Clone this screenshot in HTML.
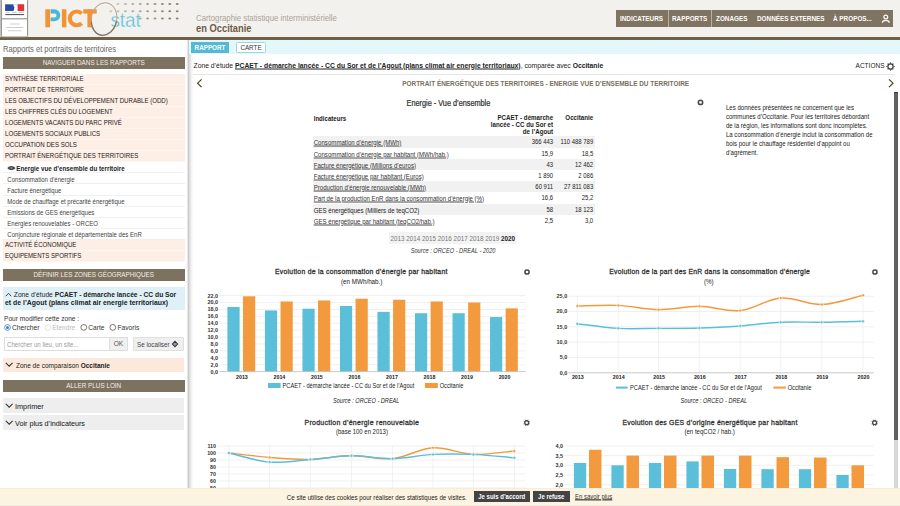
<!DOCTYPE html>
<html><head><meta charset="utf-8">
<style>
*{box-sizing:border-box;margin:0;padding:0}
html,body{width:900px;height:506px;overflow:hidden;background:#fff;font-family:"Liberation Sans",sans-serif;color:#222}
.a{position:absolute;white-space:nowrap}
.t{display:inline-block;transform:scaleY(1.17);transform-origin:0 50%;text-decoration:inherit;text-decoration-thickness:inherit;text-underline-offset:inherit;text-decoration-color:inherit;white-space:nowrap}
#hdr{position:absolute;left:0;top:0;width:900px;height:37px;background:#f3f1ed}
#hdrb{position:absolute;left:0;top:37.2px;width:900px;height:2.6px;background:#6f6049}
#menu{position:absolute;left:616px;top:10px;width:277px;height:17px;background:#7f7362}
#menu span{position:absolute;white-space:nowrap;top:0;height:17px;line-height:17px;color:#fff;font-weight:bold;font-size:6.36px}
.bar{position:absolute;left:2.5px;width:182.5px;height:11.7px;background:#7d7160;color:#f4efe6;font-size:6.34px;line-height:11.7px;text-align:center}
.it{position:absolute;left:2.5px;width:182.5px;height:11.05px;background:#fdeee6;font-size:6.1px;line-height:9.6px;padding-left:2.5px;color:#222;border-bottom:0.8px solid #fdf6f2}
.sub{position:absolute;left:2.5px;width:182.5px;height:11.05px;background:#fff;font-size:6.05px;line-height:10.6px;padding-top:1.5px;padding-left:4.8px;color:#444;border-bottom:0.8px solid #f0f0f0}
</style></head><body>
<div id="hdr"></div><div id="hdrb"></div>
<!-- marianne logo -->
<svg class="a" style="left:0;top:0" width="30" height="38">
<rect x="0" y="0" width="1.2" height="37.2" fill="#c9c6c0"/>
<rect x="1.4" y="-1" width="26.2" height="38" rx="1.5" fill="#fff" stroke="#8c8c8c" stroke-width="1"/>
<rect x="5.1" y="4.3" width="19" height="6.7" fill="#2a4c9c"/>
<path d="M12.6 4.3 C14.4 5.4 13.3 6.7 14.5 7.5 C13.9 8.5 14.4 9.8 13.4 11 L24.1 11 L24.1 4.3 Z" fill="#fff"/>
<rect x="17.6" y="4.3" width="6.5" height="6.7" fill="#e3313b"/>
<rect x="5.5" y="12" width="4" height="0.6" fill="#aaa"/><rect x="11.8" y="12" width="5" height="0.6" fill="#aaa"/><rect x="19" y="12" width="5" height="0.6" fill="#aaa"/>
<rect x="5.3" y="14.1" width="18.8" height="1" fill="#444"/>
<rect x="1.4" y="18.2" width="26.2" height="1.2" fill="#9a9a9a"/>
<rect x="10" y="23.6" width="9.5" height="0.8" fill="#c4c4c4"/>
<rect x="6" y="27.2" width="17.5" height="0.8" fill="#c4c4c4"/>
<rect x="8" y="30.4" width="13.5" height="0.8" fill="#c4c4c4"/>
</svg>
<!-- PICT stat -->
<svg class="a" style="left:0;top:0" width="190" height="37">
<ellipse cx="118.0" cy="4.1" rx="1.45" ry="1.0" fill="#8f816d" fill-opacity="0.46"/><ellipse cx="125.4" cy="4.1" rx="1.45" ry="1.0" fill="#8f816d" fill-opacity="0.54"/><ellipse cx="132.8" cy="4.1" rx="1.45" ry="1.0" fill="#8f816d" fill-opacity="0.62"/><ellipse cx="140.2" cy="4.1" rx="1.45" ry="1.0" fill="#8f816d" fill-opacity="0.70"/><ellipse cx="147.6" cy="4.1" rx="1.45" ry="1.0" fill="#8f816d" fill-opacity="0.78"/><ellipse cx="155.0" cy="4.1" rx="1.45" ry="1.0" fill="#8f816d" fill-opacity="0.86"/><ellipse cx="162.4" cy="4.1" rx="1.45" ry="1.0" fill="#8f816d" fill-opacity="0.94"/><ellipse cx="169.8" cy="4.1" rx="1.45" ry="1.0" fill="#8f816d" fill-opacity="1.00"/><ellipse cx="177.2" cy="4.1" rx="1.45" ry="1.0" fill="#8f816d" fill-opacity="1.00"/><ellipse cx="110.8" cy="11.3" rx="1.45" ry="1.0" fill="#8f816d" fill-opacity="0.38"/><ellipse cx="118.0" cy="11.3" rx="1.45" ry="1.0" fill="#8f816d" fill-opacity="0.46"/><ellipse cx="125.4" cy="11.3" rx="1.45" ry="1.0" fill="#8f816d" fill-opacity="0.54"/><ellipse cx="132.8" cy="11.3" rx="1.45" ry="1.0" fill="#8f816d" fill-opacity="0.62"/><ellipse cx="140.2" cy="11.3" rx="1.45" ry="1.0" fill="#8f816d" fill-opacity="0.70"/><ellipse cx="147.6" cy="11.3" rx="1.45" ry="1.0" fill="#8f816d" fill-opacity="0.78"/><ellipse cx="155.0" cy="11.3" rx="1.45" ry="1.0" fill="#8f816d" fill-opacity="0.86"/><ellipse cx="162.4" cy="11.3" rx="1.45" ry="1.0" fill="#8f816d" fill-opacity="0.94"/><ellipse cx="169.8" cy="11.3" rx="1.45" ry="1.0" fill="#8f816d" fill-opacity="1.00"/><ellipse cx="177.2" cy="11.3" rx="1.45" ry="1.0" fill="#8f816d" fill-opacity="1.00"/><ellipse cx="140.2" cy="18.6" rx="1.45" ry="1.0" fill="#8f816d" fill-opacity="0.70"/><ellipse cx="147.6" cy="18.6" rx="1.45" ry="1.0" fill="#8f816d" fill-opacity="0.78"/><ellipse cx="155.0" cy="18.6" rx="1.45" ry="1.0" fill="#8f816d" fill-opacity="0.86"/><ellipse cx="162.4" cy="18.6" rx="1.45" ry="1.0" fill="#8f816d" fill-opacity="0.94"/><ellipse cx="169.8" cy="18.6" rx="1.45" ry="1.0" fill="#8f816d" fill-opacity="1.00"/><ellipse cx="177.2" cy="18.6" rx="1.45" ry="1.0" fill="#8f816d" fill-opacity="1.00"/>
<rect x="45.3" y="9.3" width="4.8" height="18" fill="#f39333"/>
<path fill-rule="evenodd" fill="#4bb8d8" d="M50.6 9.3 H54.3 A6 6 0 0 1 54.3 21.3 H50.6 Z M50.6 13.6 H54.6 A1.9 1.9 0 0 1 54.6 17.4 H50.6 Z"/>
<rect x="61.9" y="9.3" width="4.5" height="18" fill="#f39333"/>
<path d="M81.6 13.6 A6.85 6.85 0 1 0 81.6 23.2" fill="none" stroke="#f39333" stroke-width="4.1"/>
<rect x="83.3" y="9.3" width="13.4" height="4.3" fill="#f39333"/>
<rect x="87.4" y="9.3" width="4.6" height="18" fill="#f39333"/>
<text x="110.4" y="27.4" font-size="20" fill="#5cbfdc" stroke="#f3f1ed" stroke-width="0.3" font-family="Liberation Sans" transform="translate(110.4 0) scale(0.945 1) translate(-110.4 0)">stat</text>
<g transform="rotate(11 104 19)"><ellipse cx="104" cy="19" rx="12.7" ry="16.4" fill="none" stroke="#b3a899" stroke-width="1"/><path d="M116.7 19 A12.7 16.4 0 0 1 104 35.4 A12.7 16.4 0 0 1 92 24" fill="none" stroke="#857866" stroke-width="1.3"/></g>
</svg>
<div class="a" style="left:196px;top:12.2px;font-size:7.8px;color:#aba398;line-height:11px"><span class="t" style="transform:scaleY(1.2)">Cartographie statistique interministérielle</span></div>
<div class="a" style="left:196px;top:23px;font-size:9.36px;font-weight:bold;color:#6b5c47;line-height:12px"><span class="t" style="transform:scaleY(1.12)">en Occitanie</span></div>
<div id="menu">
<span style="left:4px"><span class="t">INDICATEURS</span></span>
<span style="left:52px;width:44px;height:17px;border-left:1px solid #b9b0a2;border-right:1px solid #b9b0a2"></span>
<span style="left:56px"><span class="t">RAPPORTS</span></span>
<span style="left:100px"><span class="t">ZONAGES</span></span>
<span style="left:141px"><span class="t">DONNÉES EXTERNES</span></span>
<span style="left:217px"><span class="t">À PROPOS...</span></span>
<svg style="position:absolute;left:265px;top:4px" width="10" height="10"><circle cx="4.8" cy="3" r="1.9" fill="none" stroke="#fff" stroke-width="1.2"/><path d="M1.3 8.6 C1.8 5.6 7.8 5.6 8.3 8.6" fill="none" stroke="#fff" stroke-width="1.3"/></svg>
</div>
<!-- sidebar -->
<div class="a" style="left:3px;top:43.5px;font-size:7.6px;color:#666;line-height:12px"><span class="t">Rapports et portraits de territoires</span></div>
<div class="bar" style="top:57.2px"><span class="t">NAVIGUER DANS LES RAPPORTS</span></div>
<div class="it" style="top:74.00px"><span class="t">SYNTHÈSE TERRITORIALE</span></div>
<div class="it" style="top:85.05px"><span class="t">PORTRAIT DE TERRITOIRE</span></div>
<div class="it" style="top:96.10px"><span class="t">LES OBJECTIFS DU DÉVELOPPEMENT DURABLE (ODD)</span></div>
<div class="it" style="top:107.15px"><span class="t">LES CHIFFRES CLÉS DU LOGEMENT</span></div>
<div class="it" style="top:118.20px"><span class="t">LOGEMENTS VACANTS DU PARC PRIVÉ</span></div>
<div class="it" style="top:129.25px"><span class="t">LOGEMENTS SOCIAUX PUBLICS</span></div>
<div class="it" style="top:140.30px"><span class="t">OCCUPATION DES SOLS</span></div>
<div class="it" style="top:151.35px"><span class="t">PORTRAIT ÉNERGÉTIQUE DES TERRITOIRES</span></div>
<div class="sub" style="top:162.40px;font-weight:bold;color:#222;padding-left:13.8px;font-size:6.26px"><svg style="position:absolute;left:4.9px;top:2.5px" width="9" height="6"><path d="M0.3 3 C2.2 0.3 6.6 0.3 8.5 3 C6.6 5.7 2.2 5.7 0.3 3 Z" fill="#4a4a4a"/><circle cx="4.4" cy="3" r="1.1" fill="#888"/></svg><span class="t">Energie vue d’ensemble du territoire</span></div>
<div class="sub" style="top:173.45px"><span class="t">Consommation d’énergie</span></div>
<div class="sub" style="top:184.50px"><span class="t">Facture énergétique</span></div>
<div class="sub" style="top:195.55px"><span class="t">Mode de chauffage et précarité énergétique</span></div>
<div class="sub" style="top:206.60px"><span class="t">Emissions de GES énergétiques</span></div>
<div class="sub" style="top:217.65px"><span class="t">Energies renouvelables - ORCEO</span></div>
<div class="sub" style="top:228.70px"><span class="t">Conjoncture régionale et départementale des EnR</span></div>
<div class="it" style="top:239.75px"><span class="t">ACTIVITÉ ÉCONOMIQUE</span></div>
<div class="it" style="top:250.80px"><span class="t">EQUIPEMENTS SPORTIFS</span></div>
<div class="bar" style="top:269px"><span class="t">DÉFINIR LES ZONES GÉOGRAPHIQUES</span></div>
<div class="a" style="left:186.8px;top:39.8px;width:6.5px;height:449px;background:linear-gradient(to right,#f4f4f4 0,#c9c9c9 1.6px,#dedede 2.6px,#f3f3f3 4.5px,#fff 6.5px)"></div>

<!-- zone etude -->
<div class="a" style="left:3px;top:287px;width:182px;height:23px;background:#dff1f7"></div>
<svg class="a" style="left:5px;top:292px" width="8" height="5"><path d="M0.8 4.2 L3.5 1.3 L6.2 4.2" fill="none" stroke="#333" stroke-width="0.9"/></svg>
<div class="a" style="left:13.8px;top:290px;font-size:6.7px;line-height:9px;color:#222"><span class="t">Zone d’étude <b>PCAET - démarche lancée - CC du Sor</b></span></div>
<div class="a" style="left:5px;top:298px;font-size:6.9px;line-height:9px;color:#222;font-weight:bold"><span class="t">et de l’Agout (plans climat air energie territoriaux)</span></div>
<div class="a" style="left:4px;top:313.5px;font-size:6.6px;line-height:9px;color:#333"><span class="t">Pour modifier cette zone :</span></div>
<svg class="a" style="left:0;top:320px" width="185" height="15">
<circle cx="7.5" cy="7.4" r="2.9" fill="#fff" stroke="#3a7bd5" stroke-width="0.8"/><circle cx="7.5" cy="7.4" r="1.5" fill="#3a7bd5"/>
<circle cx="47.8" cy="7.4" r="2.9" fill="#fff" stroke="#ddd" stroke-width="0.8"/>
<circle cx="83.8" cy="7.4" r="2.9" fill="#fff" stroke="#555" stroke-width="0.8"/>
<circle cx="112.8" cy="7.4" r="2.9" fill="#fff" stroke="#555" stroke-width="0.8"/>
</svg>
<div class="a" style="left:11.9px;top:323px;font-size:6.74px;line-height:9px;color:#333"><span class="t">Chercher</span></div>
<div class="a" style="left:52.2px;top:323px;font-size:6.6px;line-height:9px;color:#bbb"><span class="t">Étendre</span></div>
<div class="a" style="left:88.3px;top:323px;font-size:6.6px;line-height:9px;color:#333"><span class="t">Carte</span></div>
<div class="a" style="left:117.4px;top:323px;font-size:6.74px;line-height:9px;color:#333"><span class="t">Favoris</span></div>
<div class="a" style="left:4px;top:337px;width:106px;height:14px;background:#fff;border:1px solid #ddd"></div>
<div class="a" style="left:7px;top:340px;font-size:6.14px;line-height:9px;color:#999"><span class="t">Chercher un lieu, un site...</span></div>
<div class="a" style="left:109px;top:337px;width:19px;height:14px;background:#f0f0f0;border:1px solid #ddd;font-size:6.6px;line-height:12px;text-align:center;color:#555"><span class="t">OK</span></div>
<div class="a" style="left:132.6px;top:337.4px;width:51px;height:13.8px;background:#efefef;border:1px solid #e0e0e0;border-radius:1px"></div>
<div class="a" style="left:137px;top:340px;font-size:6.3px;line-height:9px;color:#444"><span class="t">Se localiser</span></div>
<svg class="a" style="left:169.8px;top:339px" width="10" height="10"><path d="M5 2.4 L7.6 5 L5 7.6 L2.4 5 Z" fill="none" stroke="#333" stroke-width="1.1"/><circle cx="5" cy="5" r="0.8" fill="#333"/></svg>
<div class="a" style="left:3px;top:357.6px;width:180.8px;height:14.4px;background:#fce9dc"></div>
<svg class="a" style="left:4.5px;top:362.3px" width="9" height="6"><path d="M0.8 0.9 L4.2 4.2 L7.6 0.9" fill="none" stroke="#333" stroke-width="1.05"/></svg>
<div class="a" style="left:16px;top:360.5px;font-size:6.5px;line-height:9px;color:#222"><span class="t">Zone de comparaison <b>Occitanie</b></span></div>
<div class="bar" style="top:380px;height:11.5px;line-height:11.5px"><span class="t">ALLER PLUS LOIN</span></div>
<div class="a" style="left:3px;top:398px;width:181px;height:15px;background:#eee"></div>
<svg class="a" style="left:4.5px;top:403.2px" width="9" height="6"><path d="M0.8 0.9 L4.2 4.2 L7.6 0.9" fill="none" stroke="#333" stroke-width="1.05"/></svg>
<div class="a" style="left:15px;top:401.5px;font-size:7.3px;line-height:10px;color:#111">Imprimer</div>
<div class="a" style="left:3px;top:415px;width:181px;height:15px;background:#eee"></div>
<svg class="a" style="left:4.5px;top:420.2px" width="9" height="6"><path d="M0.8 0.9 L4.2 4.2 L7.6 0.9" fill="none" stroke="#333" stroke-width="1.05"/></svg>
<div class="a" style="left:15px;top:418.5px;font-size:7.2px;line-height:10px;color:#111">Voir plus d’indicateurs</div>

<!-- main tabs -->
<div class="a" style="left:189px;top:39.8px;width:711px;height:14.7px;background:#e4f8fc"></div>
<div class="a" style="left:191px;top:42px;width:38px;height:11px;background:#55b9d5;color:#fff;font-weight:bold;font-size:6.3px;line-height:11px;text-align:center"><span class="t">RAPPORT</span></div>
<div class="a" style="left:236px;top:42px;width:30px;height:11px;background:#fff;border:1px solid #9ad6e8;border-radius:1.5px;color:#333;font-size:6.3px;line-height:9px;text-align:center"><span class="t">CARTE</span></div>
<div class="a" style="left:193.5px;top:61.2px;font-size:6.79px;line-height:9px;color:#222"><span class="t">Zone d’étude <b style="text-decoration:underline;text-decoration-thickness:0.5px;text-underline-offset:-0.2px;text-decoration-color:#444">PCAET - démarche lancée - CC du Sor et de l’Agout (plans climat air energie territoriaux)</b>, comparée avec <b>Occitanie</b></span></div>
<div class="a" style="left:855.6px;top:61.4px;font-size:6.5px;line-height:9px;color:#222"><span class="t">ACTIONS</span></div><svg class="a" style="left:885px;top:61px" width="11" height="11"><g transform="translate(5.5 5.5)" stroke="#333"><circle r="2.6" fill="none" stroke-width="1.1"/><g stroke-width="1.1"><line x1="0" y1="-4.1" x2="0" y2="-3"/><line x1="0" y1="4.1" x2="0" y2="3"/><line x1="-4.1" y1="0" x2="-3" y2="0"/><line x1="4.1" y1="0" x2="3" y2="0"/><line x1="-2.9" y1="-2.9" x2="-2.1" y2="-2.1"/><line x1="2.9" y1="2.9" x2="2.1" y2="2.1"/><line x1="-2.9" y1="2.9" x2="-2.1" y2="2.1"/><line x1="2.9" y1="-2.9" x2="2.1" y2="-2.1"/></g></g></svg>
<div class="a" style="left:193px;top:74.2px;width:702px;height:1.2px;background:#e6e6e6"></div>
<svg class="a" style="left:195px;top:77px" width="10" height="12"><path d="M6.6 2.3 L2.6 6.2 L6.6 10.1" fill="none" stroke="#4a3a1c" stroke-width="1.15"/></svg>
<svg class="a" style="left:886px;top:77px" width="10" height="12"><path d="M3 2.3 L7 6.2 L3 10.1" fill="none" stroke="#4a3a1c" stroke-width="1.15"/></svg>
<div class="a" style="left:402.2px;top:79px;font-size:6.44px;line-height:9px;color:#7a6e5e;font-weight:bold"><span class="t">PORTRAIT ÉNERGÉTIQUE DES TERRITOIRES - ENERGIE VUE D’ENSEMBLE DU TERRITOIRE</span></div>
<!--MAIN--><div class="a" style="left:406.6px;top:97.9px;font-size:7.3px;line-height:9px;color:#333;-webkit-text-stroke:0.2px #333"><span class="t"><span class="t" style="transform:scaleY(1.04)">Energie - Vue d’ensemble</span></span></div>
<svg class="a" style="left:696px;top:98px" width="9" height="9"><circle cx="4.5" cy="4.4" r="2.15" fill="none" stroke="#474747" stroke-width="1.55"/></svg>
<div class="a" style="left:313.7px;top:113.5px;font-size:6.1px;line-height:9px;color:#222;font-weight:bold"><span class="t">Indicateurs</span></div>
<div class="a" style="left:453.1px;width:100px;text-align:right;top:113px;font-size:6.19px;line-height:9px;color:#222;font-weight:bold"><span class="t">PCAET - démarche</span></div>
<div class="a" style="left:453.1px;width:100px;text-align:right;top:120px;font-size:6.19px;line-height:9px;color:#222;font-weight:bold"><span class="t">lancée - CC du Sor et</span></div>
<div class="a" style="left:453.1px;width:100px;text-align:right;top:127px;font-size:6.19px;line-height:9px;color:#222;font-weight:bold"><span class="t">de l’Agout</span></div>
<div class="a" style="left:493.2px;width:100px;text-align:right;top:112.8px;font-size:6.2px;line-height:9px;color:#222;font-weight:bold"><span class="t">Occitanie</span></div>
<div class="a" style="left:312.5px;top:136.40px;width:282px;height:11.2px;background:#f1f1f1"></div>
<div class="a" style="left:313.7px;top:138.40px;font-size:6.1px;line-height:9px;text-decoration:underline;text-decoration-thickness:0.5px;text-underline-offset:-0.3px;text-decoration-color:#666;color:#333"><span class="t">Consommation d’énergie (MWh)</span></div>
<div class="a" style="left:453.1px;width:100px;text-align:right;top:138.40px;font-size:5.95px;line-height:9px;color:#222"><span class="t">366 443</span></div>
<div class="a" style="left:493.2px;width:100px;text-align:right;top:138.40px;font-size:5.95px;line-height:9px;color:#222"><span class="t">110 488 789</span></div>
<div class="a" style="left:313.7px;top:149.60px;font-size:6.1px;line-height:9px;text-decoration:underline;text-decoration-thickness:0.5px;text-underline-offset:-0.3px;text-decoration-color:#666;color:#333"><span class="t">Consommation d’énergie par habitant (MWh/hab.)</span></div>
<div class="a" style="left:453.1px;width:100px;text-align:right;top:149.60px;font-size:5.95px;line-height:9px;color:#222"><span class="t">15,9</span></div>
<div class="a" style="left:493.2px;width:100px;text-align:right;top:149.60px;font-size:5.95px;line-height:9px;color:#222"><span class="t">18,5</span></div>
<div class="a" style="left:312.5px;top:158.80px;width:282px;height:11.2px;background:#f1f1f1"></div>
<div class="a" style="left:313.7px;top:160.80px;font-size:6.1px;line-height:9px;text-decoration:underline;text-decoration-thickness:0.5px;text-underline-offset:-0.3px;text-decoration-color:#666;color:#333"><span class="t">Facture énergétique (Millions d’euros)</span></div>
<div class="a" style="left:453.1px;width:100px;text-align:right;top:160.80px;font-size:5.95px;line-height:9px;color:#222"><span class="t">43</span></div>
<div class="a" style="left:493.2px;width:100px;text-align:right;top:160.80px;font-size:5.95px;line-height:9px;color:#222"><span class="t">12 462</span></div>
<div class="a" style="left:313.7px;top:172.00px;font-size:6.1px;line-height:9px;text-decoration:underline;text-decoration-thickness:0.5px;text-underline-offset:-0.3px;text-decoration-color:#666;color:#333"><span class="t">Facture énergétique par habitant (Euros)</span></div>
<div class="a" style="left:453.1px;width:100px;text-align:right;top:172.00px;font-size:5.95px;line-height:9px;color:#222"><span class="t">1 890</span></div>
<div class="a" style="left:493.2px;width:100px;text-align:right;top:172.00px;font-size:5.95px;line-height:9px;color:#222"><span class="t">2 086</span></div>
<div class="a" style="left:312.5px;top:181.20px;width:282px;height:11.2px;background:#f1f1f1"></div>
<div class="a" style="left:313.7px;top:183.20px;font-size:6.1px;line-height:9px;text-decoration:underline;text-decoration-thickness:0.5px;text-underline-offset:-0.3px;text-decoration-color:#666;color:#333"><span class="t">Production d’énergie renouvelable (MWh)</span></div>
<div class="a" style="left:453.1px;width:100px;text-align:right;top:183.20px;font-size:5.95px;line-height:9px;color:#222"><span class="t">60 911</span></div>
<div class="a" style="left:493.2px;width:100px;text-align:right;top:183.20px;font-size:5.95px;line-height:9px;color:#222"><span class="t">27 811 083</span></div>
<div class="a" style="left:313.7px;top:194.40px;font-size:6.1px;line-height:9px;text-decoration:underline;text-decoration-thickness:0.5px;text-underline-offset:-0.3px;text-decoration-color:#666;color:#333"><span class="t">Part de la production EnR dans la consommation d’énergie (%)</span></div>
<div class="a" style="left:453.1px;width:100px;text-align:right;top:194.40px;font-size:5.95px;line-height:9px;color:#222"><span class="t">16,6</span></div>
<div class="a" style="left:493.2px;width:100px;text-align:right;top:194.40px;font-size:5.95px;line-height:9px;color:#222"><span class="t">25,2</span></div>
<div class="a" style="left:312.5px;top:203.60px;width:282px;height:11.2px;background:#f1f1f1"></div>
<div class="a" style="left:313.7px;top:205.60px;font-size:6.1px;line-height:9px;color:#222"><span class="t">GES énergétiques (Milliers de teqCO2)</span></div>
<div class="a" style="left:453.1px;width:100px;text-align:right;top:205.60px;font-size:5.95px;line-height:9px;color:#222"><span class="t">58</span></div>
<div class="a" style="left:493.2px;width:100px;text-align:right;top:205.60px;font-size:5.95px;line-height:9px;color:#222"><span class="t">18 123</span></div>
<div class="a" style="left:313.7px;top:216.80px;font-size:6.1px;line-height:9px;text-decoration:underline;text-decoration-thickness:0.5px;text-underline-offset:-0.3px;text-decoration-color:#666;color:#333"><span class="t">GES énergétique par habitant (teqCO2/hab.)</span></div>
<div class="a" style="left:453.1px;width:100px;text-align:right;top:216.80px;font-size:5.95px;line-height:9px;color:#222"><span class="t">2,5</span></div>
<div class="a" style="left:493.2px;width:100px;text-align:right;top:216.80px;font-size:5.95px;line-height:9px;color:#222"><span class="t">3,0</span></div>
<div class="a" style="left:389px;top:232.3px;width:127px;height:11.5px;background:#f3f3f3"></div>
<div class="a" style="left:390.6px;top:233.5px;font-size:6.3px;line-height:9px;color:#777"><span class="t">2013 2014 2015 2016 2017 2018 2019 <b style="color:#222">2020</b></span></div>
<div class="a" style="left:410.7px;top:246.8px;font-size:5.67px;line-height:9px;color:#333;font-style:italic"><span class="t">Source : ORCEO - DREAL - 2020</span></div>
<div class="a" style="left:725.9px;top:103.20px;font-size:6.08px;line-height:9px;color:#222"><span class="t">Les données présentées ne concernent que les</span></div>
<div class="a" style="left:725.9px;top:112.07px;font-size:6.08px;line-height:9px;color:#222"><span class="t">communes d’Occitanie. Pour les territoires débordant</span></div>
<div class="a" style="left:725.9px;top:120.94px;font-size:6.08px;line-height:9px;color:#222"><span class="t">de la région, les informations sont donc incomplètes.</span></div>
<div class="a" style="left:725.9px;top:129.81px;font-size:6.08px;line-height:9px;color:#222"><span class="t">La consommation d’énergie inclut la consommation de</span></div>
<div class="a" style="left:725.9px;top:138.68px;font-size:6.08px;line-height:9px;color:#222"><span class="t">bois pour le chauffage résidentiel d’appoint ou</span></div>
<div class="a" style="left:725.9px;top:147.55px;font-size:6.08px;line-height:9px;color:#222"><span class="t">d’agrément.</span></div>
<svg class="a" style="left:0;top:0" width="900" height="506" font-family="Liberation Sans"><text x="218" y="373.50" text-anchor="end" font-size="5.45" font-weight="bold" fill="#333">0,0</text><line x1="219.4" y1="364.69" x2="525.7" y2="364.69" stroke="#e9e9e9" stroke-width="0.7"/><text x="218" y="366.59" text-anchor="end" font-size="5.45" font-weight="bold" fill="#333">2,0</text><line x1="219.4" y1="357.78" x2="525.7" y2="357.78" stroke="#e9e9e9" stroke-width="0.7"/><text x="218" y="359.68" text-anchor="end" font-size="5.45" font-weight="bold" fill="#333">4,0</text><line x1="219.4" y1="350.87" x2="525.7" y2="350.87" stroke="#e9e9e9" stroke-width="0.7"/><text x="218" y="352.77" text-anchor="end" font-size="5.45" font-weight="bold" fill="#333">6,0</text><line x1="219.4" y1="343.96" x2="525.7" y2="343.96" stroke="#e9e9e9" stroke-width="0.7"/><text x="218" y="345.86" text-anchor="end" font-size="5.45" font-weight="bold" fill="#333">8,0</text><line x1="219.4" y1="337.05" x2="525.7" y2="337.05" stroke="#e9e9e9" stroke-width="0.7"/><text x="218" y="338.95" text-anchor="end" font-size="5.45" font-weight="bold" fill="#333">10,0</text><line x1="219.4" y1="330.15" x2="525.7" y2="330.15" stroke="#e9e9e9" stroke-width="0.7"/><text x="218" y="332.05" text-anchor="end" font-size="5.45" font-weight="bold" fill="#333">12,0</text><line x1="219.4" y1="323.24" x2="525.7" y2="323.24" stroke="#e9e9e9" stroke-width="0.7"/><text x="218" y="325.14" text-anchor="end" font-size="5.45" font-weight="bold" fill="#333">14,0</text><line x1="219.4" y1="316.33" x2="525.7" y2="316.33" stroke="#e9e9e9" stroke-width="0.7"/><text x="218" y="318.23" text-anchor="end" font-size="5.45" font-weight="bold" fill="#333">16,0</text><line x1="219.4" y1="309.42" x2="525.7" y2="309.42" stroke="#e9e9e9" stroke-width="0.7"/><text x="218" y="311.32" text-anchor="end" font-size="5.45" font-weight="bold" fill="#333">18,0</text><line x1="219.4" y1="302.51" x2="525.7" y2="302.51" stroke="#e9e9e9" stroke-width="0.7"/><text x="218" y="304.41" text-anchor="end" font-size="5.45" font-weight="bold" fill="#333">20,0</text><line x1="219.4" y1="295.60" x2="525.7" y2="295.60" stroke="#e9e9e9" stroke-width="0.7"/><text x="218" y="297.50" text-anchor="end" font-size="5.45" font-weight="bold" fill="#333">22,0</text><rect x="227.40" y="307.00" width="12.2" height="64.60" fill="#5bbfd9"/><rect x="243.00" y="296.29" width="12.2" height="75.31" fill="#f39a3e"/><text x="241.90" y="378.6" text-anchor="middle" font-size="5.3" font-weight="bold" fill="#222">2013</text><rect x="264.92" y="310.45" width="12.2" height="61.15" fill="#5bbfd9"/><rect x="280.52" y="301.47" width="12.2" height="70.13" fill="#f39a3e"/><text x="279.42" y="378.6" text-anchor="middle" font-size="5.3" font-weight="bold" fill="#222">2014</text><rect x="302.44" y="308.73" width="12.2" height="62.87" fill="#5bbfd9"/><rect x="318.04" y="300.44" width="12.2" height="71.16" fill="#f39a3e"/><text x="316.94" y="378.6" text-anchor="middle" font-size="5.3" font-weight="bold" fill="#222">2015</text><rect x="339.96" y="305.96" width="12.2" height="65.64" fill="#5bbfd9"/><rect x="355.56" y="298.71" width="12.2" height="72.89" fill="#f39a3e"/><text x="354.46" y="378.6" text-anchor="middle" font-size="5.3" font-weight="bold" fill="#222">2016</text><rect x="377.48" y="311.84" width="12.2" height="59.76" fill="#5bbfd9"/><rect x="393.08" y="299.75" width="12.2" height="71.85" fill="#f39a3e"/><text x="391.98" y="378.6" text-anchor="middle" font-size="5.3" font-weight="bold" fill="#222">2017</text><rect x="415.00" y="313.22" width="12.2" height="58.38" fill="#5bbfd9"/><rect x="430.60" y="301.47" width="12.2" height="70.13" fill="#f39a3e"/><text x="429.50" y="378.6" text-anchor="middle" font-size="5.3" font-weight="bold" fill="#222">2018</text><rect x="452.52" y="313.22" width="12.2" height="58.38" fill="#5bbfd9"/><rect x="468.12" y="302.51" width="12.2" height="69.09" fill="#f39a3e"/><text x="467.02" y="378.6" text-anchor="middle" font-size="5.3" font-weight="bold" fill="#222">2019</text><rect x="490.04" y="317.02" width="12.2" height="54.58" fill="#5bbfd9"/><rect x="505.64" y="308.38" width="12.2" height="63.22" fill="#f39a3e"/><text x="504.54" y="378.6" text-anchor="middle" font-size="5.3" font-weight="bold" fill="#222">2020</text><line x1="219.4" y1="371.60" x2="525.7" y2="371.60" stroke="#bbb" stroke-width="0.8"/><circle cx="527" cy="272" r="1.95" fill="none" stroke="#474747" stroke-width="1.3"/><line x1="529.03" y1="272.84" x2="529.96" y2="273.22" stroke="#474747" stroke-width="0.9"/><line x1="527.84" y1="274.03" x2="528.22" y2="274.96" stroke="#474747" stroke-width="0.9"/><line x1="526.16" y1="274.03" x2="525.78" y2="274.96" stroke="#474747" stroke-width="0.9"/><line x1="524.97" y1="272.84" x2="524.04" y2="273.22" stroke="#474747" stroke-width="0.9"/><line x1="524.97" y1="271.16" x2="524.04" y2="270.78" stroke="#474747" stroke-width="0.9"/><line x1="526.16" y1="269.97" x2="525.78" y2="269.04" stroke="#474747" stroke-width="0.9"/><line x1="527.84" y1="269.97" x2="528.22" y2="269.04" stroke="#474747" stroke-width="0.9"/><line x1="529.03" y1="271.16" x2="529.96" y2="270.78" stroke="#474747" stroke-width="0.9"/><text x="275" y="274.4" font-size="6.85" letter-spacing="0.26" fill="#333" stroke="#333" stroke-width="0.28">Evolution de la consommation d’énergie par habitant</text><text x="340.9" y="284.3" transform="translate(0 284.3) scale(1 1.12) translate(0 -284.3)" font-size="6.3" fill="#222">(en MWh/hab.)</text><rect x="268" y="383" width="12.6" height="5" fill="#5bbfd9"/><text x="282.6" y="388" transform="translate(0 388) scale(1 1.25) translate(0 -388)" font-size="5.68" fill="#222">PCAET - démarche lancée - CC du Sor et de l’Agout</text><rect x="424.9" y="383" width="13" height="5" fill="#f39a3e"/><text x="439.7" y="388" transform="translate(0 388) scale(1 1.25) translate(0 -388)" font-size="5.68" fill="#222">Occitanie</text><text x="333" y="403" transform="translate(0 403) scale(1 1.2) translate(0 -403)" font-size="5.6" font-style="italic" fill="#222">Source : ORCEO - DREAL</text><text x="567.2" y="374.70" text-anchor="end" font-size="5.45" font-weight="bold" fill="#333">0,0</text><line x1="568.4" y1="357.48" x2="873.7" y2="357.48" stroke="#e9e9e9" stroke-width="0.7"/><text x="567.2" y="359.38" text-anchor="end" font-size="5.45" font-weight="bold" fill="#333">5,0</text><line x1="568.4" y1="342.16" x2="873.7" y2="342.16" stroke="#e9e9e9" stroke-width="0.7"/><text x="567.2" y="344.06" text-anchor="end" font-size="5.45" font-weight="bold" fill="#333">10,0</text><line x1="568.4" y1="326.84" x2="873.7" y2="326.84" stroke="#e9e9e9" stroke-width="0.7"/><text x="567.2" y="328.74" text-anchor="end" font-size="5.45" font-weight="bold" fill="#333">15,0</text><line x1="568.4" y1="311.52" x2="873.7" y2="311.52" stroke="#e9e9e9" stroke-width="0.7"/><text x="567.2" y="313.42" text-anchor="end" font-size="5.45" font-weight="bold" fill="#333">20,0</text><line x1="568.4" y1="296.20" x2="873.7" y2="296.20" stroke="#e9e9e9" stroke-width="0.7"/><text x="567.2" y="298.10" text-anchor="end" font-size="5.45" font-weight="bold" fill="#333">25,0</text><line x1="577.3" y1="296.2" x2="577.3" y2="372.8" stroke="#ececec" stroke-width="0.7"/><text x="577.8" y="378.8" text-anchor="middle" font-size="5.3" font-weight="bold" fill="#222">2013</text><line x1="618.2" y1="296.2" x2="618.2" y2="372.8" stroke="#ececec" stroke-width="0.7"/><text x="618.7" y="378.8" text-anchor="middle" font-size="5.3" font-weight="bold" fill="#222">2014</text><line x1="658.6" y1="296.2" x2="658.6" y2="372.8" stroke="#ececec" stroke-width="0.7"/><text x="659.1" y="378.8" text-anchor="middle" font-size="5.3" font-weight="bold" fill="#222">2015</text><line x1="699.3" y1="296.2" x2="699.3" y2="372.8" stroke="#ececec" stroke-width="0.7"/><text x="699.8" y="378.8" text-anchor="middle" font-size="5.3" font-weight="bold" fill="#222">2016</text><line x1="740.2" y1="296.2" x2="740.2" y2="372.8" stroke="#ececec" stroke-width="0.7"/><text x="740.7" y="378.8" text-anchor="middle" font-size="5.3" font-weight="bold" fill="#222">2017</text><line x1="780.8" y1="296.2" x2="780.8" y2="372.8" stroke="#ececec" stroke-width="0.7"/><text x="781.3" y="378.8" text-anchor="middle" font-size="5.3" font-weight="bold" fill="#222">2018</text><line x1="821.8" y1="296.2" x2="821.8" y2="372.8" stroke="#ececec" stroke-width="0.7"/><text x="822.3" y="378.8" text-anchor="middle" font-size="5.3" font-weight="bold" fill="#222">2019</text><line x1="863.0" y1="296.2" x2="863.0" y2="372.8" stroke="#ececec" stroke-width="0.7"/><text x="863.5" y="378.8" text-anchor="middle" font-size="5.3" font-weight="bold" fill="#222">2020</text><line x1="568.4" y1="372.8" x2="873.7" y2="372.8" stroke="#bbb" stroke-width="0.8"/><path d="M577.30 306.00 C584.12 305.90 604.65 304.78 618.20 305.39 C631.75 306.00 645.08 309.53 658.60 309.68 C672.12 309.83 685.70 306.16 699.30 306.31 C712.90 306.46 726.62 311.98 740.20 310.60 C753.78 309.22 767.20 299.06 780.80 298.04 C794.40 297.02 808.10 304.93 821.80 304.47 C835.50 304.01 856.13 296.81 863.00 295.28" fill="none" stroke="#f39a3e" stroke-width="1.45"/><path d="M577.30 323.78 C584.12 324.54 604.65 327.61 618.20 328.37 C631.75 329.14 645.08 328.42 658.60 328.37 C672.12 328.32 685.70 328.47 699.30 328.07 C712.90 327.66 726.62 326.89 740.20 325.92 C753.78 324.95 767.20 322.86 780.80 322.24 C794.40 321.63 808.10 322.40 821.80 322.24 C835.50 322.09 856.13 321.48 863.00 321.32" fill="none" stroke="#5bbfd9" stroke-width="1.45"/><circle cx="577.30" cy="306.00" r="1.5" fill="#f39a3e" stroke="#fff" stroke-width="0.6"/><circle cx="618.20" cy="305.39" r="1.5" fill="#f39a3e" stroke="#fff" stroke-width="0.6"/><circle cx="658.60" cy="309.68" r="1.5" fill="#f39a3e" stroke="#fff" stroke-width="0.6"/><circle cx="699.30" cy="306.31" r="1.5" fill="#f39a3e" stroke="#fff" stroke-width="0.6"/><circle cx="740.20" cy="310.60" r="1.5" fill="#f39a3e" stroke="#fff" stroke-width="0.6"/><circle cx="780.80" cy="298.04" r="1.5" fill="#f39a3e" stroke="#fff" stroke-width="0.6"/><circle cx="821.80" cy="304.47" r="1.5" fill="#f39a3e" stroke="#fff" stroke-width="0.6"/><circle cx="863.00" cy="295.28" r="1.5" fill="#f39a3e" stroke="#fff" stroke-width="0.6"/><circle cx="577.30" cy="323.78" r="1.5" fill="#5bbfd9" stroke="#fff" stroke-width="0.6"/><circle cx="618.20" cy="328.37" r="1.5" fill="#5bbfd9" stroke="#fff" stroke-width="0.6"/><circle cx="658.60" cy="328.37" r="1.5" fill="#5bbfd9" stroke="#fff" stroke-width="0.6"/><circle cx="699.30" cy="328.07" r="1.5" fill="#5bbfd9" stroke="#fff" stroke-width="0.6"/><circle cx="740.20" cy="325.92" r="1.5" fill="#5bbfd9" stroke="#fff" stroke-width="0.6"/><circle cx="780.80" cy="322.24" r="1.5" fill="#5bbfd9" stroke="#fff" stroke-width="0.6"/><circle cx="821.80" cy="322.24" r="1.5" fill="#5bbfd9" stroke="#fff" stroke-width="0.6"/><circle cx="863.00" cy="321.32" r="1.5" fill="#5bbfd9" stroke="#fff" stroke-width="0.6"/><circle cx="874.9" cy="272" r="1.95" fill="none" stroke="#474747" stroke-width="1.3"/><line x1="876.93" y1="272.84" x2="877.86" y2="273.22" stroke="#474747" stroke-width="0.9"/><line x1="875.74" y1="274.03" x2="876.12" y2="274.96" stroke="#474747" stroke-width="0.9"/><line x1="874.06" y1="274.03" x2="873.68" y2="274.96" stroke="#474747" stroke-width="0.9"/><line x1="872.87" y1="272.84" x2="871.94" y2="273.22" stroke="#474747" stroke-width="0.9"/><line x1="872.87" y1="271.16" x2="871.94" y2="270.78" stroke="#474747" stroke-width="0.9"/><line x1="874.06" y1="269.97" x2="873.68" y2="269.04" stroke="#474747" stroke-width="0.9"/><line x1="875.74" y1="269.97" x2="876.12" y2="269.04" stroke="#474747" stroke-width="0.9"/><line x1="876.93" y1="271.16" x2="877.86" y2="270.78" stroke="#474747" stroke-width="0.9"/><text x="609.3" y="274.3" font-size="6.81" letter-spacing="0.25" fill="#333" stroke="#333" stroke-width="0.28">Evolution de la part des EnR dans la consommation d’énergie</text><text x="708.8" y="284" transform="translate(0 284) scale(1 1.12) translate(0 -284)" text-anchor="middle" font-size="6.3" fill="#222">(%)</text><line x1="615.9" y1="387.6" x2="627.7" y2="387.6" stroke="#5bbfd9" stroke-width="2"/><text x="630.1" y="389.6" transform="translate(0 389.6) scale(1 1.25) translate(0 -389.6)" font-size="5.68" fill="#222">PCAET - démarche lancée - CC du Sor et de l’Agout</text><line x1="773.4" y1="387.6" x2="785.9" y2="387.6" stroke="#f39a3e" stroke-width="2"/><text x="787.7" y="389.6" transform="translate(0 389.6) scale(1 1.25) translate(0 -389.6)" font-size="5.68" fill="#222">Occitanie</text><text x="680.6" y="403" transform="translate(0 403) scale(1 1.2) translate(0 -403)" font-size="5.6" font-style="italic" fill="#222">Source : ORCEO - DREAL</text><line x1="218" y1="446.00" x2="525.7" y2="446.00" stroke="#e9e9e9" stroke-width="0.7"/><text x="216" y="447.90" text-anchor="end" font-size="5.3" font-weight="bold" fill="#333">110</text><line x1="218" y1="453.00" x2="525.7" y2="453.00" stroke="#e9e9e9" stroke-width="0.7"/><text x="216" y="454.90" text-anchor="end" font-size="5.3" font-weight="bold" fill="#333">100</text><line x1="218" y1="460.00" x2="525.7" y2="460.00" stroke="#e9e9e9" stroke-width="0.7"/><text x="216" y="461.90" text-anchor="end" font-size="5.3" font-weight="bold" fill="#333">90</text><line x1="218" y1="467.00" x2="525.7" y2="467.00" stroke="#e9e9e9" stroke-width="0.7"/><text x="216" y="468.90" text-anchor="end" font-size="5.3" font-weight="bold" fill="#333">80</text><line x1="218" y1="474.00" x2="525.7" y2="474.00" stroke="#e9e9e9" stroke-width="0.7"/><text x="216" y="475.90" text-anchor="end" font-size="5.3" font-weight="bold" fill="#333">70</text><line x1="218" y1="481.00" x2="525.7" y2="481.00" stroke="#e9e9e9" stroke-width="0.7"/><text x="216" y="482.90" text-anchor="end" font-size="5.3" font-weight="bold" fill="#333">60</text><line x1="218" y1="488.00" x2="525.7" y2="488.00" stroke="#e9e9e9" stroke-width="0.7"/><text x="216" y="489.90" text-anchor="end" font-size="5.3" font-weight="bold" fill="#333">50</text><line x1="229.0" y1="446" x2="229.0" y2="506" stroke="#ececec" stroke-width="0.7"/><line x1="269.6" y1="446" x2="269.6" y2="506" stroke="#ececec" stroke-width="0.7"/><line x1="310.4" y1="446" x2="310.4" y2="506" stroke="#ececec" stroke-width="0.7"/><line x1="351.4" y1="446" x2="351.4" y2="506" stroke="#ececec" stroke-width="0.7"/><line x1="392.6" y1="446" x2="392.6" y2="506" stroke="#ececec" stroke-width="0.7"/><line x1="433.0" y1="446" x2="433.0" y2="506" stroke="#ececec" stroke-width="0.7"/><line x1="473.4" y1="446" x2="473.4" y2="506" stroke="#ececec" stroke-width="0.7"/><line x1="514.4" y1="446" x2="514.4" y2="506" stroke="#ececec" stroke-width="0.7"/><path d="M229.00 453.00 C235.77 453.74 256.03 456.35 269.60 457.41 C283.17 458.47 296.77 459.67 310.40 459.37 C324.03 459.07 337.70 455.71 351.40 455.59 C365.10 455.47 379.00 459.97 392.60 458.67 C406.20 457.38 419.53 448.53 433.00 447.82 C446.47 447.11 459.83 453.88 473.40 454.40 C486.97 454.92 507.57 451.54 514.40 450.97" fill="none" stroke="#f39a3e" stroke-width="1.45"/><path d="M229.00 453.00 C235.77 454.52 256.03 461.00 269.60 462.10 C283.17 463.20 296.77 460.63 310.40 459.58 C324.03 458.53 337.70 455.95 351.40 455.80 C365.10 455.65 379.00 458.90 392.60 458.67 C406.20 458.44 419.53 455.11 433.00 454.40 C446.47 453.69 459.83 453.83 473.40 454.40 C486.97 454.97 507.57 457.26 514.40 457.83" fill="none" stroke="#5bbfd9" stroke-width="1.45"/><circle cx="229.00" cy="453.00" r="1.5" fill="#f39a3e" stroke="#fff" stroke-width="0.6"/><circle cx="269.60" cy="457.41" r="1.5" fill="#f39a3e" stroke="#fff" stroke-width="0.6"/><circle cx="310.40" cy="459.37" r="1.5" fill="#f39a3e" stroke="#fff" stroke-width="0.6"/><circle cx="351.40" cy="455.59" r="1.5" fill="#f39a3e" stroke="#fff" stroke-width="0.6"/><circle cx="392.60" cy="458.67" r="1.5" fill="#f39a3e" stroke="#fff" stroke-width="0.6"/><circle cx="433.00" cy="447.82" r="1.5" fill="#f39a3e" stroke="#fff" stroke-width="0.6"/><circle cx="473.40" cy="454.40" r="1.5" fill="#f39a3e" stroke="#fff" stroke-width="0.6"/><circle cx="514.40" cy="450.97" r="1.5" fill="#f39a3e" stroke="#fff" stroke-width="0.6"/><circle cx="229.00" cy="453.00" r="1.5" fill="#5bbfd9" stroke="#fff" stroke-width="0.6"/><circle cx="269.60" cy="462.10" r="1.5" fill="#5bbfd9" stroke="#fff" stroke-width="0.6"/><circle cx="310.40" cy="459.58" r="1.5" fill="#5bbfd9" stroke="#fff" stroke-width="0.6"/><circle cx="351.40" cy="455.80" r="1.5" fill="#5bbfd9" stroke="#fff" stroke-width="0.6"/><circle cx="392.60" cy="458.67" r="1.5" fill="#5bbfd9" stroke="#fff" stroke-width="0.6"/><circle cx="433.00" cy="454.40" r="1.5" fill="#5bbfd9" stroke="#fff" stroke-width="0.6"/><circle cx="473.40" cy="454.40" r="1.5" fill="#5bbfd9" stroke="#fff" stroke-width="0.6"/><circle cx="514.40" cy="457.83" r="1.5" fill="#5bbfd9" stroke="#fff" stroke-width="0.6"/><circle cx="526.7" cy="422.7" r="1.95" fill="none" stroke="#474747" stroke-width="1.3"/><line x1="528.73" y1="423.54" x2="529.66" y2="423.92" stroke="#474747" stroke-width="0.9"/><line x1="527.54" y1="424.73" x2="527.92" y2="425.66" stroke="#474747" stroke-width="0.9"/><line x1="525.86" y1="424.73" x2="525.48" y2="425.66" stroke="#474747" stroke-width="0.9"/><line x1="524.67" y1="423.54" x2="523.74" y2="423.92" stroke="#474747" stroke-width="0.9"/><line x1="524.67" y1="421.86" x2="523.74" y2="421.48" stroke="#474747" stroke-width="0.9"/><line x1="525.86" y1="420.67" x2="525.48" y2="419.74" stroke="#474747" stroke-width="0.9"/><line x1="527.54" y1="420.67" x2="527.92" y2="419.74" stroke="#474747" stroke-width="0.9"/><line x1="528.73" y1="421.86" x2="529.66" y2="421.48" stroke="#474747" stroke-width="0.9"/><text x="304.6" y="424.8" font-size="6.94" letter-spacing="0.28" fill="#333" stroke="#333" stroke-width="0.28">Production d’énergie renouvelable</text><text x="336" y="433.8" transform="translate(0 433.8) scale(1 1.12) translate(0 -433.8)" font-size="6.0" fill="#222">(base 100 en 2013)</text><line x1="563.9" y1="445.90" x2="873.3" y2="445.90" stroke="#e9e9e9" stroke-width="0.7"/><text x="563" y="447.80" text-anchor="end" font-size="5.45" font-weight="bold" fill="#333">4,0</text><line x1="563.9" y1="455.60" x2="873.3" y2="455.60" stroke="#e9e9e9" stroke-width="0.7"/><text x="563" y="457.50" text-anchor="end" font-size="5.45" font-weight="bold" fill="#333">3,5</text><line x1="563.9" y1="465.30" x2="873.3" y2="465.30" stroke="#e9e9e9" stroke-width="0.7"/><text x="563" y="467.20" text-anchor="end" font-size="5.45" font-weight="bold" fill="#333">3,0</text><line x1="563.9" y1="475.00" x2="873.3" y2="475.00" stroke="#e9e9e9" stroke-width="0.7"/><text x="563" y="476.90" text-anchor="end" font-size="5.45" font-weight="bold" fill="#333">2,5</text><line x1="563.9" y1="484.70" x2="873.3" y2="484.70" stroke="#e9e9e9" stroke-width="0.7"/><text x="563" y="486.60" text-anchor="end" font-size="5.45" font-weight="bold" fill="#333">2,0</text><rect x="573.90" y="462.97" width="12.3" height="43.03" fill="#5bbfd9"/><rect x="589.00" y="449.78" width="12.5" height="56.22" fill="#f39a3e"/><rect x="611.40" y="465.30" width="12.3" height="40.70" fill="#5bbfd9"/><rect x="626.50" y="455.60" width="12.5" height="50.40" fill="#f39a3e"/><rect x="648.90" y="462.97" width="12.3" height="43.03" fill="#5bbfd9"/><rect x="664.00" y="455.60" width="12.5" height="50.40" fill="#f39a3e"/><rect x="686.40" y="461.42" width="12.3" height="44.58" fill="#5bbfd9"/><rect x="701.50" y="455.60" width="12.5" height="50.40" fill="#f39a3e"/><rect x="723.90" y="468.99" width="12.3" height="37.01" fill="#5bbfd9"/><rect x="739.00" y="455.60" width="12.5" height="50.40" fill="#f39a3e"/><rect x="761.40" y="469.18" width="12.3" height="36.82" fill="#5bbfd9"/><rect x="776.50" y="457.15" width="12.5" height="48.85" fill="#f39a3e"/><rect x="798.90" y="469.18" width="12.3" height="36.82" fill="#5bbfd9"/><rect x="814.00" y="457.54" width="12.5" height="48.46" fill="#f39a3e"/><rect x="836.40" y="475.00" width="12.3" height="31.00" fill="#5bbfd9"/><rect x="851.50" y="465.30" width="12.5" height="40.70" fill="#f39a3e"/><circle cx="874.6" cy="422.7" r="1.95" fill="none" stroke="#474747" stroke-width="1.3"/><line x1="876.63" y1="423.54" x2="877.56" y2="423.92" stroke="#474747" stroke-width="0.9"/><line x1="875.44" y1="424.73" x2="875.82" y2="425.66" stroke="#474747" stroke-width="0.9"/><line x1="873.76" y1="424.73" x2="873.38" y2="425.66" stroke="#474747" stroke-width="0.9"/><line x1="872.57" y1="423.54" x2="871.64" y2="423.92" stroke="#474747" stroke-width="0.9"/><line x1="872.57" y1="421.86" x2="871.64" y2="421.48" stroke="#474747" stroke-width="0.9"/><line x1="873.76" y1="420.67" x2="873.38" y2="419.74" stroke="#474747" stroke-width="0.9"/><line x1="875.44" y1="420.67" x2="875.82" y2="419.74" stroke="#474747" stroke-width="0.9"/><line x1="876.63" y1="421.86" x2="877.56" y2="421.48" stroke="#474747" stroke-width="0.9"/><text x="622.4" y="424.8" font-size="6.86" letter-spacing="0.26" fill="#333" stroke="#333" stroke-width="0.28">Evolution des GES d’origine énergétique par habitant</text><text x="684.4" y="433.8" transform="translate(0 433.8) scale(1 1.12) translate(0 -433.8)" font-size="6.1" fill="#222">(en teqCO2 / hab.)</text></svg><!--/MAIN-->
<!-- scrollbar -->
<div class="a" style="left:894px;top:440px;width:3.7px;height:48px;background:#d8d8d8"></div>
<div class="a" style="left:894px;top:92.2px;width:3.7px;height:348px;background:#626262;border-top:1px solid #3a3a3a"></div>

<!-- cookie bar -->
<div class="a" style="left:0;top:488px;width:900px;height:18px;background:#fcf3e0;border-top:1px solid #f8eed8;border-bottom:1px solid #f0e9e2"></div>
<div class="a" style="left:286.8px;top:492.5px;font-size:6.17px;line-height:9px;color:#222"><span class="t">Ce site utilise des cookies pour réaliser des statistiques de visites.</span></div>
<div class="a" style="left:473.6px;top:491px;width:56.4px;height:11.4px;background:#444;color:#fff;font-weight:bold;font-size:6px;line-height:11.4px;padding-top:1.3px;text-align:center"><span class="t">Je suis d’accord</span></div>
<div class="a" style="left:533px;top:491px;width:36.6px;height:11.4px;background:#444;color:#fff;font-weight:bold;font-size:6px;line-height:11.4px;padding-top:1.3px;text-align:center"><span class="t">Je refuse</span></div>
<div class="a" style="left:575px;top:492.5px;font-size:5.95px;line-height:9px;color:#333;text-decoration:underline;text-decoration-thickness:0.5px;text-underline-offset:-0.3px"><span class="t">En savoir plus</span></div>
</body></html>
